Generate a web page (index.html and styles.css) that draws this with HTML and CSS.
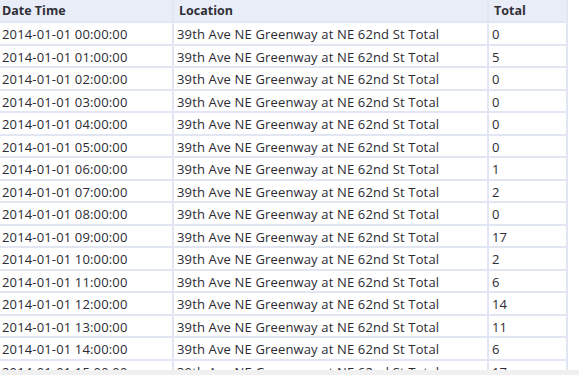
FILE: index.html
```html
<!DOCTYPE html>
<html lang="en">
<head>
  <meta charset="UTF-8" />
  <title>Browse Results</title>
  <link rel="stylesheet" href="styles.css">
</head>
<body>
  <div class="grid">
    <div class="row head">
      <div class="cell"><span class="title">Date Time</span><span class="quality" style="--ok: 40px"></span></div>
      <div class="cell"><span class="title">Location</span><span class="quality" style="--ok: 77px"></span></div>
      <div class="cell"><span class="title">Total</span><span class="quality" style="--ok: 17px"></span></div>
    </div>

    <div id="rows"></div>
  </div>

  <div class="scrollbar"></div>

  <script>
    const totals = [0, 5, 0, 0, 0, 0, 1, 2, 0, 17, 2, 6, 14, 11, 6, 17];
    const rows = document.getElementById('rows');

    totals.forEach((total, hour) => {
      const hh = String(hour).padStart(2, '0');
      const row = document.createElement('div');
      row.className = 'row';
      row.innerHTML = `
        <div class="cell">2014-01-01 ${hh}:00:00</div>
        <div class="cell">39th Ave NE Greenway at NE 62nd St Total</div>
        <div class="cell">${total}</div>`;
      rows.appendChild(row);
    });
  </script>
</body>
</html>
```

FILE: styles.css
```css
:root {
  --line: #e1e6f2;
  --head-bg: #e9edf7;
  --text: #2b2b33;
  --ok: #9fe37f;
}

html, body {
  margin: 0;
  height: 100%;
  overflow: hidden;
  background: #ffffff;
}

body {
  font-family: 'Open Sans', 'Noto Sans', sans-serif;
  font-size: 13px;
  letter-spacing: 0.15px;
  color: var(--text);
  position: relative;
}

.grid {
  width: 568px;
  display: flex;
  flex-direction: column;
  gap: 2px;
  background: var(--line);
}

#rows {
  display: flex;
  flex-direction: column;
  gap: 2px;
}

.row {
  display: grid;
  grid-template-columns: 172px 313px 77px;
  column-gap: 2px;
  height: 20.5px;
}

.cell {
  background: #ffffff;
  padding-left: 2px;
  line-height: 22px;
  white-space: nowrap;
  overflow: hidden;
}

.row .cell:nth-child(2),
.row .cell:nth-child(3) {
  padding-left: 3px;
}

.head {
  height: 21px;
}

.head .cell {
  background: var(--head-bg);
  position: relative;
  line-height: 21px;
  padding-left: 2px;
}

.head .cell:first-child {
  padding-left: 0;
}

.title {
  font-weight: 700;
  font-size: 12.5px;
  letter-spacing: 0;
  color: #303038;
  padding-left: 2px;
}

.quality {
  position: absolute;
  left: 0;
  right: 0;
  bottom: 0;
  height: 2px;
  background:
    linear-gradient(var(--ok), var(--ok)) left / var(--ok) 100% no-repeat,
    repeating-linear-gradient(90deg, #c9ccd3 0 2px, #f2f3f6 2px 4px);
}

.scrollbar {
  position: absolute;
  left: 0;
  right: 0;
  bottom: 0;
  height: 5px;
  background: #f0f0f0;
}
```
